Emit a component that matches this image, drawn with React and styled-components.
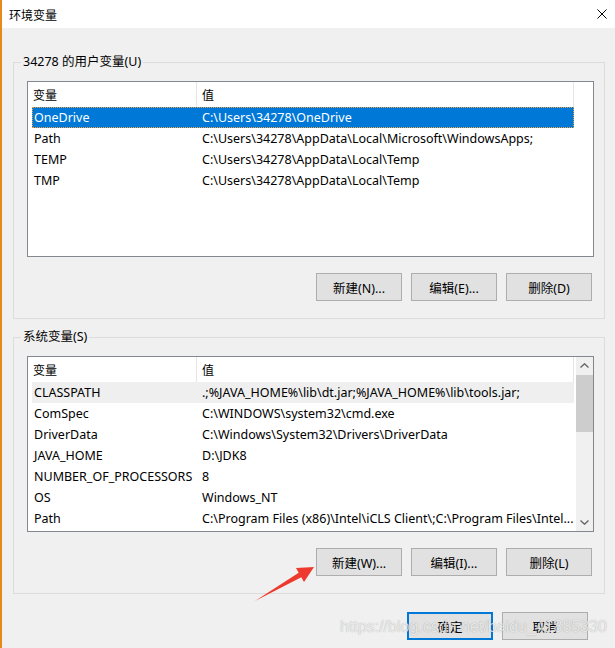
import styled, { createGlobalStyle } from "styled-components";

const GlobalStyle = createGlobalStyle`
  html, body {
    margin: 0;
    padding: 0;
    background: #f0f0f0;
  }
  body {
    font-family: "Noto Sans", "Noto Sans CJK SC", sans-serif;
    font-size: 12px;
    color: #000;
  }
  * {
    box-sizing: border-box;
  }
`;

const Window = styled.div`
  position: relative;
  width: 615px;
  height: 648px;
  border-left: 2px solid #e8891c;
  background: #f0f0f0;
  overflow: hidden;
`;

const TitleBar = styled.div`
  height: 28px;
  background: #fff;
  display: flex;
  align-items: center;
  justify-content: space-between;
  padding: 0 8px 0 7px;
  font-family: "Noto Sans CJK SC", sans-serif;
  font-size: 12px;
`;

const CloseBtn = styled.div`
  width: 10px;
  height: 10px;
  display: flex;
`;

const Body = styled.div`
  padding: 34px 10px 0 11px;
`;

const Group = styled.div`
  position: relative;
  border: 1px solid #dcdcdc;
  padding: 18px 10px 17px 13px;
  margin-top: ${(p) => p.$top || 0}px;
`;

const Caption = styled.span`
  position: absolute;
  top: -9px;
  left: 7px;
  padding: 0 2px;
  background: #f0f0f0;
  line-height: 16px;
  font-size: 12.5px;
  font-family: "Noto Sans", "Noto Sans CJK SC", sans-serif;
`;

const List = styled.div`
  position: relative;
  height: 176px;
  border: 1px solid #828790;
  background: #fff;
  overflow: hidden;
`;

const Header = styled.div`
  display: grid;
  grid-template-columns: 169px 377px;
  height: 25px;
  align-items: stretch;
`;

const HeadCell = styled.div`
  display: flex;
  align-items: center;
  padding-left: 5px;
  border-right: 1px solid #e5e5e5;
  font-family: "Noto Sans CJK SC", sans-serif;
`;

const Row = styled.div`
  display: grid;
  grid-template-columns: 164px 378px;
  height: 21px;
  margin-left: 4px;
  width: 542px;
  align-items: center;
  white-space: nowrap;
  font-size: 12.5px;
  background: ${(p) => (p.$selected ? "#0078d7" : p.$hover ? "#efefef" : "transparent")};
  color: ${(p) => (p.$selected ? "#fff" : "#000")};
  outline: ${(p) => (p.$selected ? "1px dotted #f0a040" : "none")};
  outline-offset: -1px;
`;

const Cell = styled.div`
  overflow: hidden;
  text-overflow: ellipsis;
  padding-left: ${(p) => p.$pad}px;
`;

const ScrollBar = styled.div`
  position: absolute;
  top: 0;
  right: 0;
  width: 17px;
  height: 100%;
  background: #f0f0f0;
  display: flex;
  flex-direction: column;
`;

const ScrollArrow = styled.div`
  height: 17px;
  display: flex;
  align-items: center;
  justify-content: center;
`;

const Track = styled.div`
  flex: 1;
  padding-top: 1px;
`;

const Thumb = styled.div`
  height: 57px;
  background: #cdcdcd;
`;

const ButtonRow = styled.div`
  display: flex;
  justify-content: flex-end;
  gap: ${(p) => p.$gap || 9}px;
  margin-top: ${(p) => p.$top || 16}px;
  padding-right: ${(p) => p.$right || 2}px;
`;

const Button = styled.button`
  width: 86px;
  height: 28px;
  margin: 0;
  padding: 0;
  background: #e1e1e1;
  border: ${(p) => (p.$primary ? "2px solid #0078d7" : "1px solid #adadad")};
  font-family: "Noto Sans", "Noto Sans CJK SC", sans-serif;
  font-size: 12.5px;
  color: #000;
`;

const Watermark = styled.div`
  position: absolute;
  left: 338px;
  top: 617px;
  font-family: "Liberation Sans", Arial, sans-serif;
  font-size: 16px;
  line-height: 20px;
  color: rgba(255, 255, 255, 0.75);
  text-shadow: 0 0 1px rgba(0, 0, 0, 0.35);
  pointer-events: none;
`;

const Arrow = styled.svg`
  position: absolute;
  left: 252px;
  top: 564px;
`;

const userVars = [
  ["OneDrive", "C:\\Users\\34278\\OneDrive"],
  ["Path", "C:\\Users\\34278\\AppData\\Local\\Microsoft\\WindowsApps;"],
  ["TEMP", "C:\\Users\\34278\\AppData\\Local\\Temp"],
  ["TMP", "C:\\Users\\34278\\AppData\\Local\\Temp"],
];

const sysVars = [
  ["CLASSPATH", ".;%JAVA_HOME%\\lib\\dt.jar;%JAVA_HOME%\\lib\\tools.jar;"],
  ["ComSpec", "C:\\WINDOWS\\system32\\cmd.exe"],
  ["DriverData", "C:\\Windows\\System32\\Drivers\\DriverData"],
  ["JAVA_HOME", "D:\\JDK8"],
  ["NUMBER_OF_PROCESSORS", "8"],
  ["OS", "Windows_NT"],
  ["Path", "C:\\Program Files (x86)\\Intel\\iCLS Client\\;C:\\Program Files\\Intel..."],
];

const VarList = ({ rows, selected, hover, scroll }) => (
  <List>
    <Header>
      <HeadCell>变量</HeadCell>
      <HeadCell>值</HeadCell>
    </Header>
    {rows.map(([name, value], i) => (
      <Row key={name + i} $selected={i === selected} $hover={i === hover}>
        <Cell $pad={2}>{name}</Cell>
        <Cell $pad={6}>{value}</Cell>
      </Row>
    ))}
    {scroll && (
      <ScrollBar>
        <ScrollArrow>
          <svg width="9" height="5" viewBox="0 0 9 5">
            <polyline points="0.5,4.5 4.5,0.8 8.5,4.5" fill="none" stroke="#606060" strokeWidth="1.3" />
          </svg>
        </ScrollArrow>
        <Track>
          <Thumb />
        </Track>
        <ScrollArrow>
          <svg width="9" height="5" viewBox="0 0 9 5">
            <polyline points="0.5,0.5 4.5,4.2 8.5,0.5" fill="none" stroke="#606060" strokeWidth="1.3" />
          </svg>
        </ScrollArrow>
      </ScrollBar>
    )}
  </List>
);

export default function App() {
  return (
    <>
      <GlobalStyle />
      <Window>
        <TitleBar>
          <span>环境变量</span>
          <CloseBtn>
            <svg width="10" height="10" viewBox="0 0 10 10">
              <path d="M0.5 0.5 L9.5 9.5 M9.5 0.5 L0.5 9.5" stroke="#000" strokeWidth="1" />
            </svg>
          </CloseBtn>
        </TitleBar>
        <Body>
          <Group>
            <Caption>34278 的用户变量(U)</Caption>
            <VarList rows={userVars} selected={0} />
            <ButtonRow>
              <Button>新建(N)...</Button>
              <Button>编辑(E)...</Button>
              <Button>删除(D)</Button>
            </ButtonRow>
          </Group>
          <Group $top={18}>
            <Caption>系统变量(S)</Caption>
            <VarList rows={sysVars} hover={0} scroll />
            <ButtonRow>
              <Button>新建(W)...</Button>
              <Button>编辑(I)...</Button>
              <Button>删除(L)</Button>
            </ButtonRow>
          </Group>
          <ButtonRow $top={18} $gap={9} $right={17}>
            <Button $primary>确定</Button>
            <Button>取消</Button>
          </ButtonRow>
        </Body>
        <Arrow width="64" height="40" viewBox="0 0 64 40">
          <polygon points="1,37 44.7,8.8 42,4 60,3 50,18 47.3,13.2" fill="#ee3a2e" />
        </Arrow>
        <Watermark>https://blog.csdn.net/baidu_41885330</Watermark>
      </Window>
    </>
  );
}
